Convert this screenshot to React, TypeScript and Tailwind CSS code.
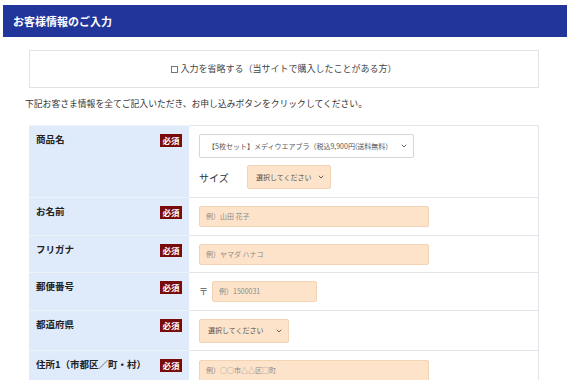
import { ChevronDown } from "lucide-react";

const jp = { fontFamily: '"Noto Sans CJK JP", "Noto Sans", sans-serif' };

function Badge() {
  return (
    <span className="flex h-[13px] w-[22px] items-center justify-center bg-[#7a0b0b] text-[8.5px] font-bold leading-none text-white">
      必須
    </span>
  );
}

function Label({ text }: { text: string }) {
  return (
    <div className="flex w-[160px] shrink-0 items-start justify-between border-t border-[#eef2f9] bg-[#dfeafb] pl-[7px] pr-[7px] pt-[8px]">
      <span className="text-[9.5px] font-bold leading-[11px] text-[#222]">{text}</span>
      <Badge />
    </div>
  );
}

function TextInput({ ph, w = "w-[230px]" }: { ph: string; w?: string }) {
  return (
    <div className={`flex h-[21px] ${w} items-center rounded-[2px] border border-[#f2d3b3] bg-[#fde3c9] pl-[6px] text-[7px] text-[#8a8a8a]`}>
      {ph}
    </div>
  );
}

function Select({ text, w, peach = true }: { text: string; w: string; peach?: boolean }) {
  return (
    <div
      className={`flex h-[24px] ${w} items-center justify-between rounded-[2px] border pl-[8px] pr-[5px] text-[7px] text-[#555] ${
        peach ? "border-[#f2d3b3] bg-[#fde3c9]" : "border-[#d6d6d6] bg-white"
      }`}
    >
      <span>{text}</span>
      <ChevronDown size={8} strokeWidth={2.5} className="text-[#444]" />
    </div>
  );
}

function Row({ label, h, children }: { label: string; h: string; children: React.ReactNode }) {
  return (
    <div className={`flex ${h}`}>
      <Label text={label} />
      <div className="flex flex-1 items-center border-t border-[#e3e6eb] pl-[10px]">{children}</div>
    </div>
  );
}

export default function App() {
  return (
    <div className="h-[380px] w-[570px] overflow-hidden bg-white pt-[5px]" style={jp}>
      {/* Header */}
      <div className="mx-[3px] flex h-[32px] items-center bg-[#22359a] pl-[10px]">
        <h1 className="text-[11px] font-bold text-white">お客様情報のご入力</h1>
      </div>

      <div className="ml-[29px] mr-[31px]">
        {/* Skip box */}
        <div className="mt-[13px] flex h-[38px] items-center justify-center border border-[#e2e2e2] text-[9px] text-[#444]">
          <span className="mr-[2px] inline-block h-[7px] w-[7px] border border-[#777]" />
          入力を省略する（当サイトで購入したことがある方）
        </div>

        <p className="-ml-[4px] mt-[10px] text-[8.8px] leading-[12px] text-[#333]">
          下記お客さま情報を全てご記入いただき、お申し込みボタンをクリックしてください。
        </p>

        {/* Form table */}
        <div className="mt-[15px] border-r border-[#e3e6eb]">
          <div className="flex h-[72px]">
            <Label text="商品名" />
            <div className="flex flex-1 flex-col gap-[7px] border-t border-[#e3e6eb] pl-[10px] pt-[8px]">
              <Select text="【5枚セット】メディウエアブラ（税込9,900円(送料無料）" w="w-[215px]" peach={false} />
              <div className="flex items-center">
                <span className="w-[48px] text-[10px] text-[#333]">サイズ</span>
                <Select text="選択してください" w="w-[84px]" />
              </div>
            </div>
          </div>

          <Row label="お名前" h="h-[38px]">
            <TextInput ph="例）山田 花子" />
          </Row>

          <Row label="フリガナ" h="h-[37px]">
            <TextInput ph="例）ヤマダ ハナコ" />
          </Row>

          <Row label="郵便番号" h="h-[38px]">
            <span className="mr-[4px] text-[9px] text-[#555]">〒</span>
            <TextInput ph="例）1500031" w="w-[105px]" />
          </Row>

          <Row label="都道府県" h="h-[40px]">
            <Select text="選択してください" w="w-[90px]" />
          </Row>

          <Row label="住所1（市都区／町・村）" h="h-[40px]">
            <TextInput ph="例）○○市△△区□町" />
          </Row>
        </div>
      </div>
    </div>
  );
}
